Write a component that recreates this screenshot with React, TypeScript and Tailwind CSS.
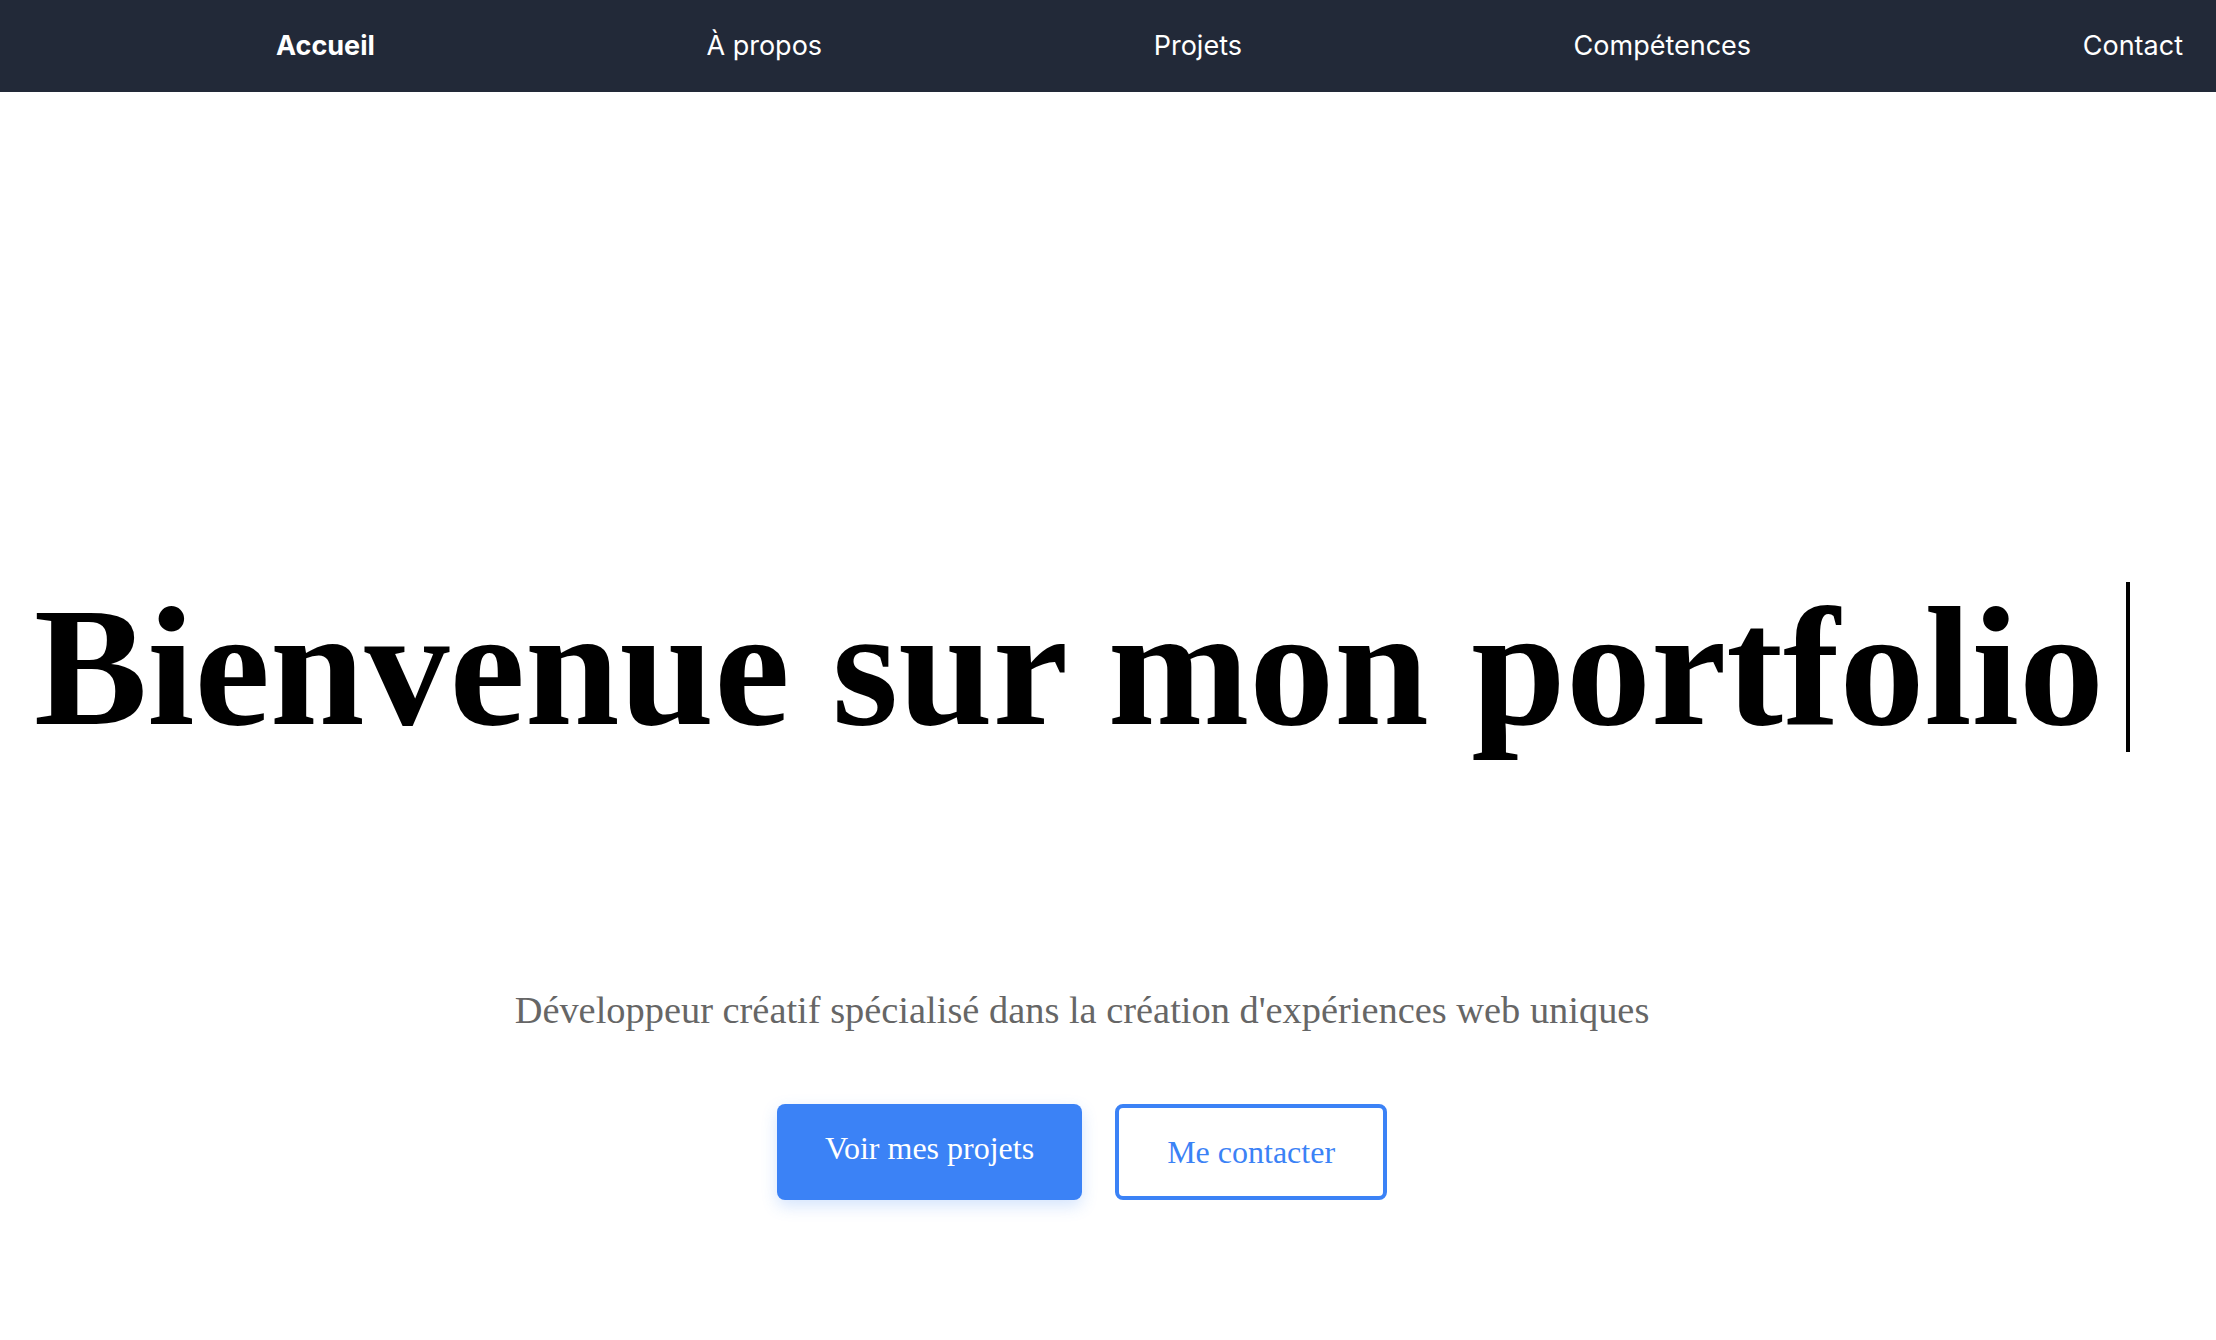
import React from "react"

const links = ["Accueil", "À propos", "Projets", "Compétences", "Contact"]

function Navbar() {
  return (
    <nav className="h-[92px] bg-[#222938] flex items-center justify-between pl-[276px] pr-[33px] font-['Inter',sans-serif] text-[27px] text-white">
      {links.map((l, i) => (
        <a key={l} href="#" className={i === 0 ? "font-bold" : "font-normal"}>
          {l}
        </a>
      ))}
    </nav>
  )
}

export default function App() {
  return (
    <div className="min-h-screen bg-white">
      <Navbar />

      {/* Hero */}
      <section className="flex flex-col items-center pr-[52px] pt-[490px] font-['Liberation_Serif','Times_New_Roman',serif]">
        <h1 className="flex items-stretch leading-none text-[170px] font-bold text-black whitespace-nowrap">
          <span>Bienvenue sur mon portfolio</span>
          <span className="w-[4px] ml-[22px] bg-black" />
        </h1>

        <p className="mt-[236px] text-[38.4px] leading-[normal] text-[#666666]">
          Développeur créatif spécialisé dans la création d'expériences web uniques
        </p>

        <div className="mt-[72px] flex gap-[33px] text-[32px] leading-[normal]">
          <a
            href="#"
            className="px-[48px] pt-[25.6px] rounded-lg bg-[#3b82f6] text-white shadow-[0_6px_16px_rgba(59,130,246,0.22)]"
          >
            Voir mes projets
          </a>
          <a
            href="#"
            className="px-[48px] py-[25.6px] rounded-lg border-4 border-[#3b82f6] bg-white text-[#3b82f6]"
          >
            Me contacter
          </a>
        </div>
      </section>
    </div>
  )
}
